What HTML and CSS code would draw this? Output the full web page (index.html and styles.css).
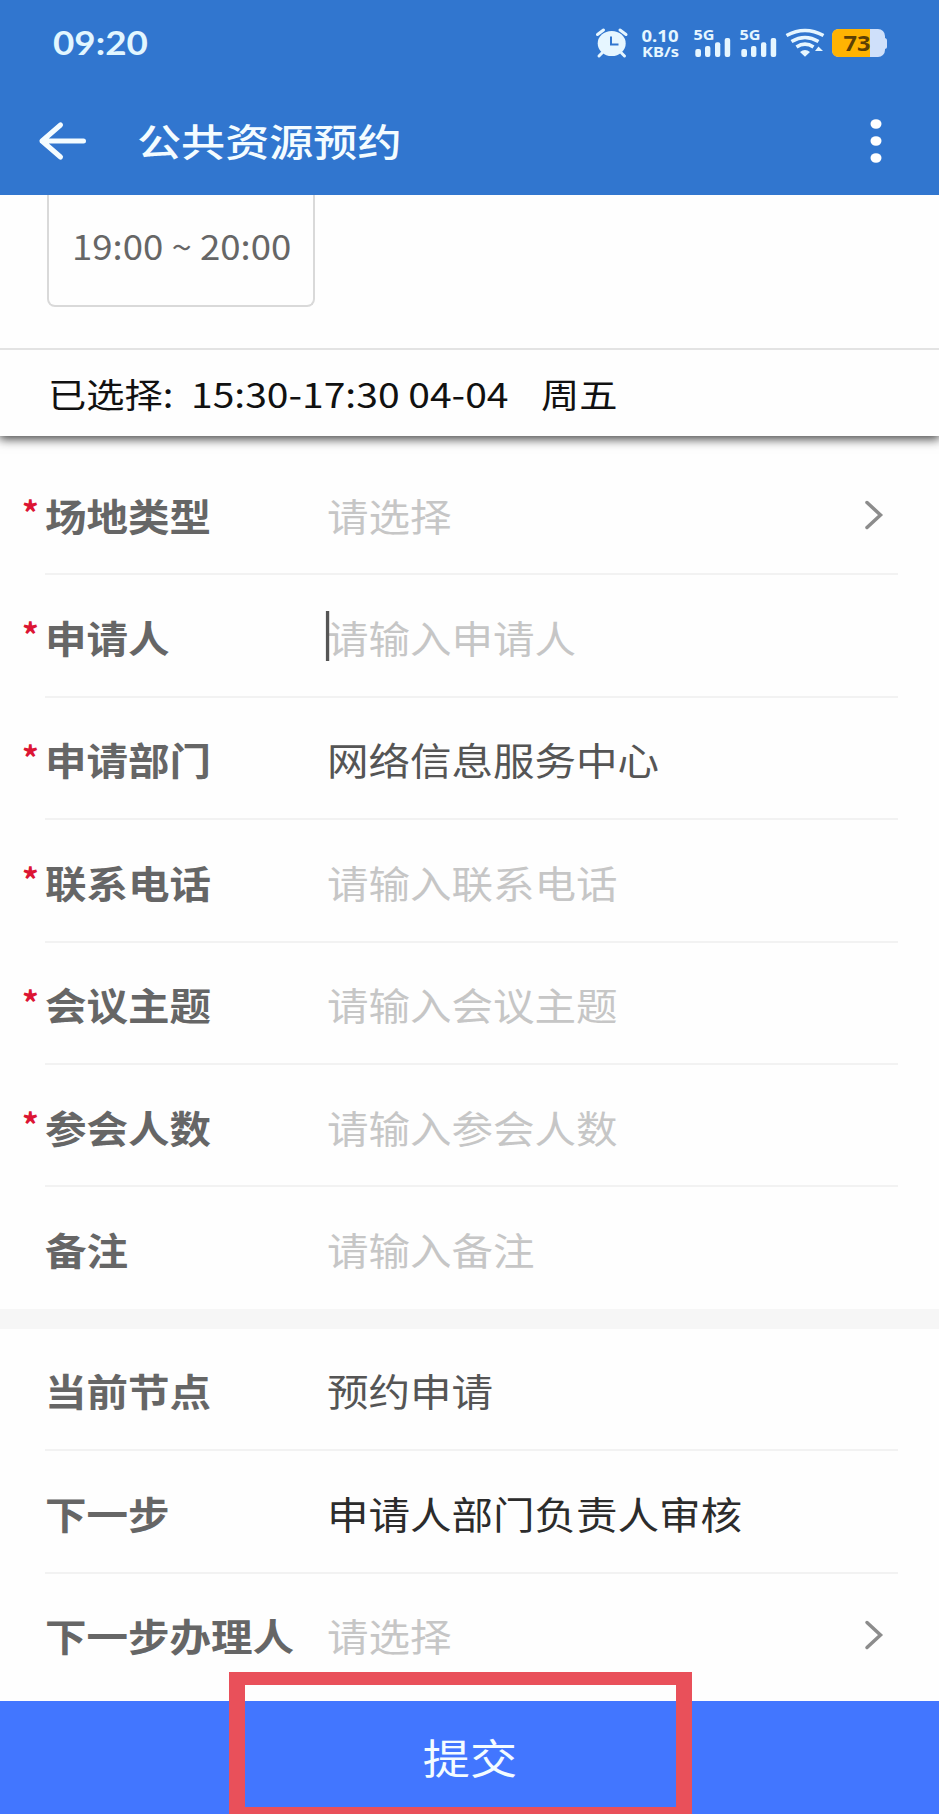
FILE: index.html
```html
<!DOCTYPE html>
<html lang="zh-CN">
<head>
  <meta charset="UTF-8" />
  <meta name="viewport" content="width=device-width, initial-scale=1.0" />
  <title>公共资源预约</title>
  <link rel="stylesheet" href="styles.css">
</head>
<body>
  <header>
    <div class="status">
      <span class="time">09:20</span>
      <!-- alarm, net speed, signal x2, wifi, battery -->
      <svg class="status-icons" width="296" height="34" viewBox="594 26 296 34">
        <g fill="#e6f6ff">
          <ellipse cx="611.7" cy="43.5" rx="14" ry="12.6" />
          <path d="M611 36.5v8h7.5" fill="none" stroke="#3176cf" stroke-width="2" />
          <path d="M597.500 34.500l6-4.500M626 34.500l-6-4.500M602 53l-3 3M621.500 53l3 3" fill="none" stroke="#e6f6ff" stroke-width="3" stroke-linecap="round" />
          <text class="net" x="641.500" y="41.500" font-size="16" textLength="37" lengthAdjust="spacingAndGlyphs">0.10</text>
          <text class="net" x="642" y="56.500" font-size="15" textLength="37" lengthAdjust="spacingAndGlyphs">KB/s</text>
          <g id="signal">
            <text class="net" x="693.500" y="40" font-size="14" textLength="21" lengthAdjust="spacingAndGlyphs">5G</text>
            <rect x="695.300" y="49" width="5.700" height="8" rx="2" />
            <rect x="705" y="46" width="5.400" height="11" rx="2" />
            <rect x="715" y="42.300" width="5.300" height="14.700" rx="2" />
            <rect x="724.700" y="38" width="5.500" height="19" rx="2" />
          </g>
          <use href="#signal" x="46" />
          <g fill="none" stroke="#e6f6ff" stroke-width="3.600">
            <path d="M786.500 35.500q18.500-10 37 0" />
            <path d="M791.500 41.500q13.500-8 27 0" />
            <path d="M796.500 47q8.500-5.600 17 0" />
          </g>
          <path d="M800 52q5-4 10 0l-5 4.700zM815 51l3.500-4.500 4.500 4.500z" />
        </g>
        <rect x="882" y="38" width="5" height="11" rx="2.500" fill="#cfe0fa" />
        <rect x="832" y="29" width="53" height="28" rx="7" fill="#cfe0fa" />
        <path d="M870 29h-31q-7 0-7 7v14q0 7 7 7h31z" fill="#ffb302" />
        <text class="net" x="843.500" y="51" font-size="21" textLength="27" lengthAdjust="spacingAndGlyphs" fill="#5c3f05">73</text>
      </svg>
    </div>
    <div class="titlebar">
      <svg width="50" height="40" viewBox="0 0 50 40" fill="none" stroke="#f4fcff" stroke-width="5" stroke-linecap="round" stroke-linejoin="round">
        <path d="M45.500 20H4M22.500 4L4 20l18.500 16" />
      </svg>
      <h1>公共资源预约</h1>
      <svg class="more" width="12" height="46" viewBox="0 0 12 46" fill="#fff">
        <ellipse cx="6" cy="6" rx="5.500" ry="4.800" />
        <ellipse cx="6" cy="23" rx="5.500" ry="4.800" />
        <ellipse cx="6" cy="40" rx="5.500" ry="4.800" />
      </svg>
    </div>
  </header>

  <div class="slots">
    <div class="slot"><span>19:00 ~ 20:00</span></div>
  </div>
  <div class="selected">
    <span class="sel-label">已选择:</span>
    <span class="sel-time">15:30-17:30 04-04</span>
    <span class="sel-day">周五</span>
  </div>

  <main>
    <div class="row required">
      <label>场地类型</label><span class="value placeholder">请选择</span>
      <svg class="arrow" width="20" height="32" viewBox="0 0 20 32"><path d="M3 3.500L16.500 16 3 28.500" /></svg>
    </div>
    <div class="row required"><label>申请人</label><span class="value placeholder focus">请输入申请人</span></div>
    <div class="row required"><label>申请部门</label><span class="value">网络信息服务中心</span></div>
    <div class="row required"><label>联系电话</label><span class="value placeholder">请输入联系电话</span></div>
    <div class="row required"><label>会议主题</label><span class="value placeholder">请输入会议主题</span></div>
    <div class="row required"><label>参会人数</label><span class="value placeholder">请输入参会人数</span></div>
    <div class="row last"><label>备注</label><span class="value placeholder">请输入备注</span></div>
    <div class="gap"></div>
    <div class="row"><label>当前节点</label><span class="value">预约申请</span></div>
    <div class="row"><label>下一步</label><span class="value dark">申请人部门负责人审核</span></div>
    <div class="row last">
      <label>下一步办理人</label><span class="value placeholder">请选择</span>
      <svg class="arrow" width="20" height="32" viewBox="0 0 20 32"><path d="M3 3.500L16.500 16 3 28.500" /></svg>
    </div>
  </main>

  <footer>
    <button class="submit"><span>提交</span></button>
    <div class="highlight"></div>
  </footer>
</body>
</html>
```
FILE: styles.css
```css
* { box-sizing: border-box; }
body { margin: 0; width: 939px; height: 1814px; overflow: hidden; display: flex; flex-direction: column; background: #fefefe; font-family: "Noto Sans CJK SC", sans-serif; }

header { flex: none; height: 195px; background: #3176cf; color: #f4fcff; }
.status { height: 86px; display: flex; align-items: center; justify-content: space-between; padding: 0 49px 0 53px; }
.time { font: bold 32px/34px Lato, sans-serif; color: #e2f6ff; transform: scaleX(1.15); transform-origin: left; }
.net { font-family: "Noto Sans", sans-serif; font-weight: bold; }
.titlebar { display: flex; align-items: center; height: 109px; padding: 0 57px 0 38px; }
.titlebar h1 { margin: 0 auto 2px 49px; font-size: 38px; line-height: 56px; font-weight: 500; transform: scaleX(1.16); transform-origin: left; }

.slots { flex: none; height: 155px; padding-left: 47px; border-bottom: 2px solid #e3e3e3; }
.slot { width: 268px; height: 112px; padding: 26px 0 0 23px; border: 2px solid #d9d9d9; border-top: 0; border-radius: 0 0 8px 8px; font-size: 34px; line-height: 50px; color: #666; white-space: nowrap; }
.slot span { display: inline-block; transform: scaleX(1.075); transform-origin: left; }
.selected { flex: none; position: relative; display: flex; align-items: center; height: 86px; padding-left: 48px; font-size: 34px; color: #111; background: #fefefe; box-shadow: 0 2px 10px 1px rgba(0,0,0,0.75); clip-path: inset(0 0 -20px 0); white-space: nowrap; }
.selected span { transform: scaleX(1.125); transform-origin: left; }
.selected .sel-label { width: 143px; }
.selected .sel-time { width: 350px; transform: scaleX(1.148); }

main { flex: none; height: 1265px; padding-top: 17px; }
.row { display: flex; align-items: center; position: relative; height: 122.4px; margin: 0 41px 0 45px; padding-top: 2px; border-bottom: 2px solid #f2f2f2; font-size: 37.5px; white-space: nowrap; }
.row.last { height: 121.4px; border-bottom-color: transparent; }
.row label { width: 282px; font-weight: bold; color: #666; transform: scaleX(1.107); transform-origin: left; }
.row.required::before { content: "*"; position: absolute; left: -23px; top: 37px; font-size: 33px; line-height: 44px; font-weight: bold; color: #dc1534; }
.value { color: #555; transform: scaleX(1.107); transform-origin: left; }
.value.placeholder { color: #c6c6c6; }
.value.dark { color: #2c2c2c; }
.value.focus::before { content: ""; position: absolute; left: -1px; top: 2px; width: 2.5px; height: 50px; background: #555; }
.arrow { margin: 2px 14px 0 auto; fill: none; stroke: #8c8c8c; stroke-width: 3.5; stroke-linecap: round; }
.gap { height: 20px; background: #f6f6f6; }

footer { position: relative; flex: none; height: 113px; }
.submit { display: block; width: 100%; height: 113px; padding: 0 0 4px; border: 0; background: #4276ff; color: #f4fcff; font: 41px/60px "Noto Sans CJK SC", sans-serif; }
.submit span { display: inline-block; transform: scaleX(1.15); }
/* frame round the submit button */
.highlight { position: absolute; left: 229px; top: -29px; width: 463px; height: 142px; border: 13px solid #e9505a; border-width: 13px 16px 7px; }
```
